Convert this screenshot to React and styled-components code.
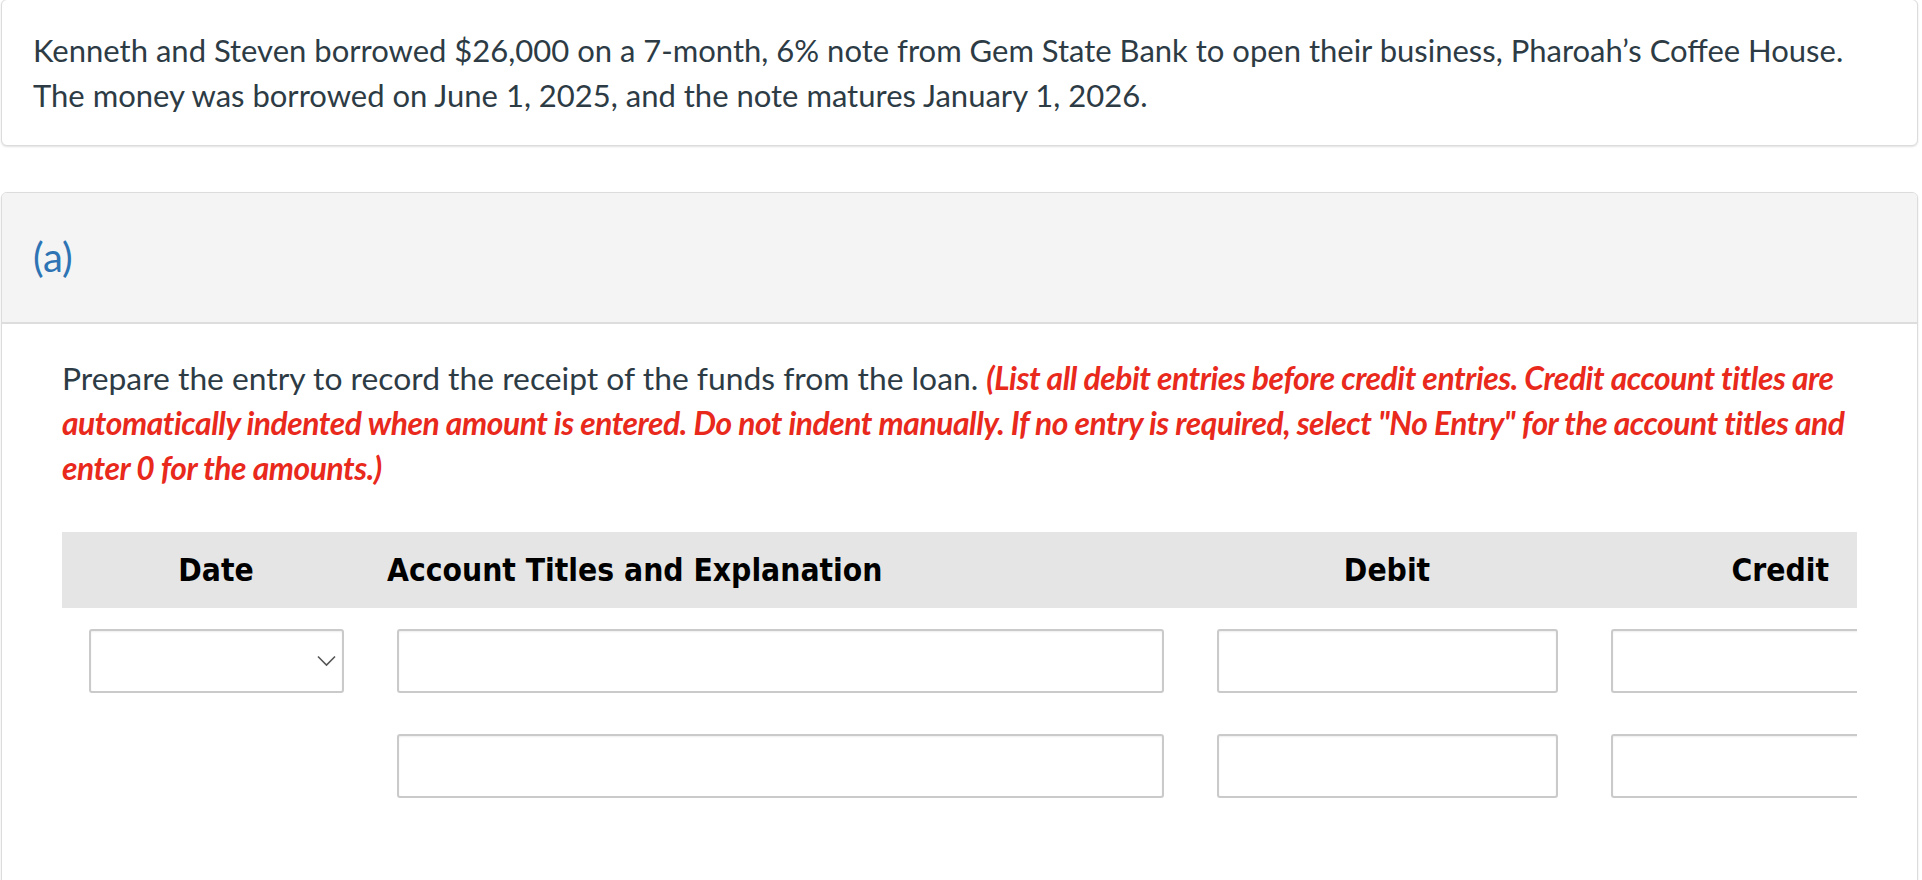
import React from "react";
import styled, { createGlobalStyle } from "styled-components";

const Global = createGlobalStyle`
  html, body { margin: 0; padding: 0; background: #ffffff; }
  body { font-family: Lato, "Open Sans", sans-serif; color: #2d3b45; overflow: hidden; }
  * { box-sizing: border-box; }
`;

const Page = styled.div`
  width: 1922px;
  padding: 0 4px 0 1px;
  display: flex;
  flex-direction: column;
  gap: 46px;
  margin-top: -1px;
`;

const Card = styled.section`
  border: 1px solid #dcdcdc;
  border-radius: 6px;
  background: #ffffff;
  box-shadow: 0 1px 2px rgba(0, 0, 0, 0.12);
  overflow: hidden;
`;

const Stem = styled.p`
  margin: 0;
  padding: 28px 31px 27px;
  font-size: 31px;
  line-height: 45px;
  color: #2d3b45;
`;

const PartHeader = styled.div`
  background: #f4f4f4;
  border-bottom: 2px solid #dddddd;
  padding: 42px 31px 42px;
  font-size: 40px;
  line-height: 45px;
  color: #2e74b5;
`;

const PartBody = styled.div`
  padding: 32px 60px 120px;
`;

const Instruction = styled.p`
  margin: 0 0 41px;
  font-size: 31.8px;
  line-height: 45px;
  color: #2d3b45;
`;

const Note = styled.em`
  font-weight: 700;
  font-style: italic;
  color: #e8291c;
  letter-spacing: -0.45px;
`;

const TableWrap = styled.div`
  overflow: hidden;
  width: 100%;
`;

const Grid = styled.div`
  display: grid;
  grid-template-columns: 308px 820px 394px 394px;
  width: 1916px;
`;

const HeadCell = styled.div`
  background: #e5e5e5;
  height: 76px;
  display: flex;
  align-items: center;
  justify-content: ${(p) => p.$align || "center"};
  padding: 0 ${(p) => (p.$align === "flex-end" ? "149px" : "17px")} 0 17px;
  font-family: "DejaVu Sans Condensed", "DejaVu Sans", sans-serif;
  font-stretch: condensed;
  font-weight: 700;
  font-size: 31.5px;
  color: #000000;
  white-space: nowrap;
`;

const Cell = styled.div`
  padding: 21px 26px 20px 27px;
`;

const Box = styled.div`
  position: relative;
  height: 64px;
  border: 2px solid #cacaca;
  border-radius: 3px;
  background: #ffffff;
  box-shadow: inset 0 1px 2px rgba(0, 0, 0, 0.07);
`;

const Chevron = styled.svg`
  position: absolute;
  right: 6px;
  top: 50%;
  transform: translateY(-50%);
`;

const Select = () => (
  <Box>
    <Chevron width="19" height="11" viewBox="0 0 19 11">
      <path d="M1 1 L9.5 9.5 L18 1" fill="none" stroke="#555" strokeWidth="1.6" />
    </Chevron>
  </Box>
);

export default function App() {
  return (
    <>
      <Global />
      <Page>
        <Card>
          <Stem>
            Kenneth and Steven borrowed $26,000 on a 7-month, 6% note from Gem State Bank to open their business,
            Pharoah’s Coffee House. The money was borrowed on June 1, 2025, and the note matures January 1, 2026.
          </Stem>
        </Card>
        <Card>
          <PartHeader>(a)</PartHeader>
          <PartBody>
            <Instruction>
              Prepare the entry to record the receipt of the funds from the loan.{" "}
              <Note>
                (List all debit entries before credit entries. Credit account titles are automatically indented
                when amount is entered. Do not indent manually. If no entry is required, select "No Entry" for the
                account titles and enter 0 for the amounts.)
              </Note>
            </Instruction>
            <TableWrap>
              <Grid>
                <HeadCell>Date</HeadCell>
                <HeadCell $align="flex-start">Account Titles and Explanation</HeadCell>
                <HeadCell>Debit</HeadCell>
                <HeadCell $align="flex-end">Credit</HeadCell>

                <Cell><Select /></Cell>
                <Cell><Box /></Cell>
                <Cell><Box /></Cell>
                <Cell><Box /></Cell>

                <Cell />
                <Cell><Box /></Cell>
                <Cell><Box /></Cell>
                <Cell><Box /></Cell>
              </Grid>
            </TableWrap>
          </PartBody>
        </Card>
      </Page>
    </>
  );
}
